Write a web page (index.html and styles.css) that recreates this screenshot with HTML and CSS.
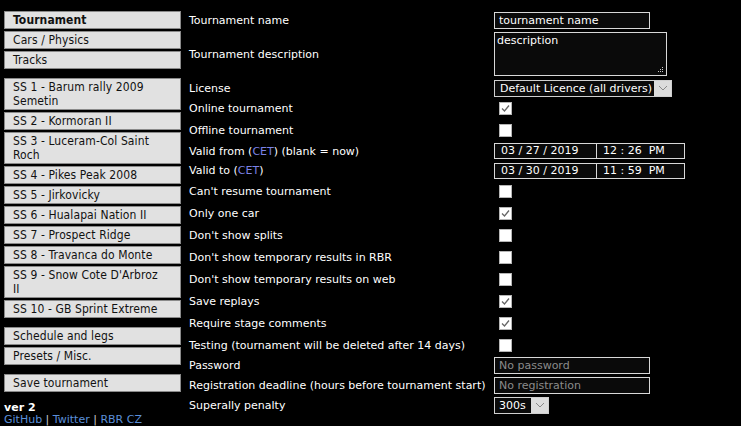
FILE: index.html
```html
<!DOCTYPE html>
<html>
<head>
<meta charset="utf-8">
<link rel="stylesheet" href="styles.css">
</head>
<body>
<div class="page">
  <nav class="sidebar">
    <div class="group">
      <div class="btn bold">Tournament</div>
      <div class="btn">Cars / Physics</div>
      <div class="btn">Tracks</div>
    </div>
    <div class="group">
      <div class="btn">SS 1 - Barum rally 2009 Semetin</div>
      <div class="btn">SS 2 - Kormoran II</div>
      <div class="btn">SS 3 - Luceram-Col Saint Roch</div>
      <div class="btn">SS 4 - Pikes Peak 2008</div>
      <div class="btn">SS 5 - Jirkovicky</div>
      <div class="btn">SS 6 - Hualapai Nation II</div>
      <div class="btn">SS 7 - Prospect Ridge</div>
      <div class="btn">SS 8 - Travanca do Monte</div>
      <div class="btn">SS 9 - Snow Cote D'Arbroz II</div>
      <div class="btn">SS 10 - GB Sprint Extreme</div>
    </div>
    <div class="group">
      <div class="btn">Schedule and legs</div>
      <div class="btn">Presets / Misc.</div>
    </div>
    <div class="group">
      <div class="btn">Save tournament</div>
    </div>
    <div class="footer">
      <div class="ver">ver 2</div>
      <div class="links"><a>GitHub</a> | <a>Twitter</a> | <a>RBR CZ</a></div>
    </div>
  </nav>
  <main class="form">
    <div class="row h20"><div class="lbl">Tournament name</div><div class="ctl"><div class="input w156">tournament name</div></div></div>
    <div class="row h48"><div class="lbl">Tournament description</div><div class="ctl"><div class="textarea">description<svg class="grip" width="7" height="7" viewBox="0 0 7 7"><rect x="5" y="1" width="1" height="1" fill="#ccc"/><rect x="3" y="3" width="1" height="1" fill="#ccc"/><rect x="5" y="3" width="1" height="1" fill="#ccc"/><rect x="1" y="5" width="1" height="1" fill="#ccc"/><rect x="3" y="5" width="1" height="1" fill="#ccc"/><rect x="5" y="5" width="1" height="1" fill="#ccc"/></svg></div></div></div>
    <div class="row h20"><div class="lbl">License</div><div class="ctl"><div class="select w178"><span class="sel-text">Default Licence (all drivers)</span><span class="arrow"><svg width="10" height="6" viewBox="0 0 10 6"><path d="M1 1 L5 5 L9 1" fill="none" stroke="#888" stroke-width="1"/></svg></span></div></div></div>
    <div class="row h21"><div class="lbl">Online tournament</div><div class="ctl"><span class="cb on"></span></div></div>
    <div class="row h22"><div class="lbl">Offline tournament</div><div class="ctl"><span class="cb"></span></div></div>
    <div class="row h20"><div class="lbl">Valid from (<span class="cet">CET</span>) (blank = now)</div><div class="ctl"><div class="date">03 / 27 / 2019</div><div class="time">12 : 26 &nbsp;PM</div></div></div>
    <div class="row h19"><div class="lbl">Valid to (<span class="cet">CET</span>)</div><div class="ctl"><div class="date">03 / 30 / 2019</div><div class="time">11 : 59 &nbsp;PM</div></div></div>
    <div class="row h22"><div class="lbl">Can't resume tournament</div><div class="ctl"><span class="cb"></span></div></div>
    <div class="row h22"><div class="lbl">Only one car</div><div class="ctl"><span class="cb on"></span></div></div>
    <div class="row h22"><div class="lbl">Don't show splits</div><div class="ctl"><span class="cb"></span></div></div>
    <div class="row h22"><div class="lbl">Don't show temporary results in RBR</div><div class="ctl"><span class="cb"></span></div></div>
    <div class="row h22"><div class="lbl">Don't show temporary results on web</div><div class="ctl"><span class="cb"></span></div></div>
    <div class="row h22"><div class="lbl">Save replays</div><div class="ctl"><span class="cb on"></span></div></div>
    <div class="row h22"><div class="lbl">Require stage comments</div><div class="ctl"><span class="cb on"></span></div></div>
    <div class="row h22"><div class="lbl">Testing (tournament will be deleted after 14 days)</div><div class="ctl"><span class="cb"></span></div></div>
    <div class="row h19"><div class="lbl">Password</div><div class="ctl"><div class="input w156 ph">No password</div></div></div>
    <div class="row h20"><div class="lbl">Registration deadline (hours before tournament start)</div><div class="ctl"><div class="input w156 ph">No registration</div></div></div>
    <div class="row h20"><div class="lbl">Superally penalty</div><div class="ctl"><div class="select w55"><span class="sel-text">300s</span><span class="arrow"><svg width="10" height="6" viewBox="0 0 10 6"><path d="M1 1 L5 5 L9 1" fill="none" stroke="#888" stroke-width="1"/></svg></span></div></div></div>
  </main>
</div>
</body>
</html>
```

FILE: styles.css
```css
html, body {
  margin: 0;
  padding: 0;
  background: #000;
  color: #fff;
}
body {
  font-family: "DejaVu Sans", Verdana, sans-serif;
  font-size: 11px;
}
.page {
  display: flex;
  gap: 8px;
  padding: 10px 0 0 4px;
}
.sidebar {
  width: 177px;
  padding-top: 1px;
  display: flex;
  flex-direction: column;
}
.group {
  display: flex;
  flex-direction: column;
  gap: 2px;
  margin-bottom: 9px;
}
.btn {
  background: #e1e1e1;
  color: #111;
  border: 1px solid #8a8a8a;
  font-family: "DejaVu Sans Condensed", Tahoma, sans-serif;
  font-size: 12px;
  line-height: 14px;
  letter-spacing: 0.1px;
  padding: 1px 18px 1px 8px;
}
.btn.bold {
  font-weight: bold;
}
.footer {
  margin-top: 1px;
  font-size: 11px;
  line-height: 12px;
}
.ver {
  font-weight: bold;
}
.links {
  color: #ccc;
}
.links a {
  color: #5b8fd9;
}
.form {
  display: flex;
  flex-direction: column;
}
.row {
  display: flex;
  align-items: center;
}
.h19 { height: 19px; }
.h20 { height: 20px; }
.h21 { height: 21px; }
.h22 { height: 22px; }
.h48 { height: 48px; }
.lbl {
  width: 305px;
  white-space: nowrap;
}
.cet {
  color: #7b82e6;
}
.ctl {
  display: flex;
  align-items: center;
}
.input {
  box-sizing: border-box;
  height: 17px;
  border: 1px solid #d8d8d8;
  background: #0a0a0a;
  color: #fff;
  padding: 0 4px;
  line-height: 15px;
}
.input.ph {
  color: #8a8a8a;
}
.w156 { width: 156px; }
.textarea {
  position: relative;
  box-sizing: border-box;
  width: 173px;
  height: 44px;
  border: 1px solid #d8d8d8;
  background: #0a0a0a;
  padding: 1px 2px;
  line-height: 13px;
}
.grip {
  position: absolute;
  right: 2px;
  bottom: 2px;
}
.select {
  box-sizing: border-box;
  height: 17px;
  border: 1px solid #cfcfcf;
  background: #0a0a0a;
  display: flex;
  align-items: stretch;
}
.w178 { width: 178px; }
.w55 { width: 55px; }
.sel-text {
  flex: 1;
  padding-left: 4px;
  line-height: 15px;
  white-space: nowrap;
  overflow: hidden;
}
.w178 .sel-text { padding-left: 5px; }
.arrow {
  width: 17px;
  background: #dcdcdc;
  display: flex;
  align-items: center;
  justify-content: center;
}
.cb {
  box-sizing: border-box;
  display: inline-block;
  width: 13px;
  height: 13px;
  margin-left: 5px;
  background: #fff;
  border: 1px solid #b5b5b5;
}
.cb.on {
  background: #fff url("data:image/svg+xml;utf8,<svg xmlns='http://www.w3.org/2000/svg' width='11' height='11' viewBox='0 0 11 11'><path d='M2 5.5 L4.5 8 L9 2.5' fill='none' stroke='%23666' stroke-width='1.3'/></svg>") no-repeat center;
}
.date, .time {
  box-sizing: border-box;
  height: 16px;
  border: 1px solid #d8d8d8;
  background: #0a0a0a;
  line-height: 14px;
  padding-left: 6px;
  white-space: pre;
}
.date { width: 103px; }
.time { width: 89px; margin-left: -1px; }
```
